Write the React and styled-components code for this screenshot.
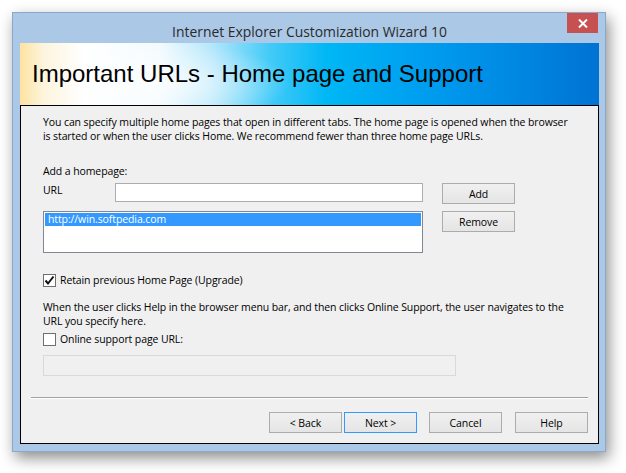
import React from "react";
import styled, { createGlobalStyle } from "styled-components";

const GlobalStyle = createGlobalStyle`
  html, body {
    margin: 0;
    padding: 0;
    background: #ffffff;
  }
  body {
    font-family: "Open Sans", "Noto Sans", sans-serif;
    font-size: 10.5px;
    letter-spacing: -0.1px;
    color: #000;
  }
`;

const Page = styled.div`
  width: 626px;
  height: 473px;
  padding: 12px 0 0 12px;
  box-sizing: border-box;
`;

const Window = styled.div`
  width: 594px;
  height: 440px;
  box-sizing: border-box;
  display: flex;
  flex-direction: column;
  padding: 0 6px 7px 7px;
  background: #abc8e6;
  border: 1px solid #89a8cb;
  box-shadow: 3px 6px 14px rgba(0, 0, 0, 0.45);
`;

const TitleBar = styled.div`
  height: 30px;
  display: grid;
  grid-template-columns: 1fr auto 1fr;
  align-items: start;
`;

const Title = styled.div`
  grid-column: 2;
  padding-top: 9px;
  font-size: 13.9px;
  letter-spacing: 0;
  color: #2a2a2a;
  white-space: nowrap;
`;

const CloseButton = styled.div`
  grid-column: 3;
  justify-self: end;
  margin-right: 1px;
  width: 31px;
  height: 20px;
  background: #c75050;
  display: flex;
  align-items: center;
  justify-content: center;
`;

const Banner = styled.div`
  height: 62px;
  display: flex;
  align-items: center;
  padding-left: 12px;
  background:
    radial-gradient(ellipse 120px 40px at 150px 40px, rgba(255, 255, 255, 0.7), rgba(255, 255, 255, 0)),
    linear-gradient(90deg, #fde3a0 0%, #fdf4dc 4%, #ffffff 11%, #f3fbfe 24%, #b5e7fb 33%, #44cbf8 43%, #00b7f5 53%, #009def 70%, #0086e2 87%, #0072d2 100%);
`;

const BannerTitle = styled.h1`
  margin: 0;
  font-family: "Liberation Sans", Arial, sans-serif;
  font-weight: normal;
  font-size: 24px;
  letter-spacing: 0;
  color: #000;
`;

const Content = styled.div`
  flex: 1;
  display: flex;
  flex-direction: column;
  background: #f0f0f0;
  border: 1px solid #000;
`;

const Body = styled.div`
  display: flex;
  flex-direction: column;
  padding: 9px 0 0 22px;
`;

const Text = styled.p`
  margin: ${(p) => p.$top || 0}px 0 0 0;
  line-height: 14px;
  white-space: nowrap;
`;

const UrlGrid = styled.div`
  margin-top: 5px;
  display: grid;
  grid-template-columns: 72px 308px 19px 73px;
  grid-template-rows: 21px 42px;
  row-gap: 7px;
`;

const Label = styled.span`
  line-height: 14px;
`;

const TextBox = styled.div`
  height: 19px;
  box-sizing: border-box;
  background: #fff;
  border: 1px solid #abadb3;
`;

const ListBox = styled.div`
  grid-column: 1 / span 2;
  width: 380px;
  box-sizing: border-box;
  padding: 1px;
  background: #fff;
  border: 1px solid #828790;
`;

const ListItem = styled.div`
  height: 13px;
  line-height: 13px;
  padding-left: 3px;
  background: ${(p) => (p.$selected ? "#3399ff" : "transparent")};
  color: ${(p) => (p.$selected ? "#fff" : "#000")};
`;

const Button = styled.button`
  grid-column: ${(p) => p.$col || "auto"};
  width: 73px;
  height: 21px;
  margin: 0 0 0 ${(p) => p.$space || 0}px;
  padding: 0;
  box-sizing: border-box;
  font-family: "Open Sans", "Noto Sans", sans-serif;
  font-size: 10.5px;
  letter-spacing: -0.1px;
  color: #000;
  background: linear-gradient(#f0f0f0, #e5e5e5);
  border: 1px solid ${(p) => (p.$default ? "#3399ff" : "#acacac")};
`;

const CheckRow = styled.label`
  margin-top: ${(p) => p.$top}px;
  display: flex;
  align-items: center;
  gap: 4px;
  height: 13px;
  line-height: 13px;
`;

const Box = styled.span`
  width: 13px;
  height: 13px;
  box-sizing: border-box;
  background: #fff;
  border: 1px solid #707070;
  display: flex;
  align-items: center;
  justify-content: center;
`;

const DisabledBox = styled.div`
  margin-top: 9px;
  width: 413px;
  height: 21px;
  box-sizing: border-box;
  background: #f0f0f0;
  border: 1px solid #d9d9d9;
`;

const Footer = styled.div`
  margin-top: auto;
  padding: 0 10px 10px 10px;
`;

const Separator = styled.div`
  border-top: 1px solid #a0a0a0;
  border-bottom: 1px solid #ffffff;
`;

const ButtonRow = styled.div`
  margin-top: 13px;
  display: flex;
  justify-content: flex-end;
`;

const Checkbox = ({ checked }) => (
  <Box>
    {checked && (
      <svg width="11" height="11" viewBox="0 0 11 11">
        <path d="M1.5 5.5 L4 8.5 L9.5 1.5" fill="none" stroke="#111" strokeWidth="2" />
      </svg>
    )}
  </Box>
);

export default function App() {
  return (
    <Page>
      <GlobalStyle />
      <Window>
        <TitleBar>
          <Title>Internet Explorer Customization Wizard 10</Title>
          <CloseButton>
            <svg width="10" height="9" viewBox="0 0 10 9">
              <path d="M1 0.5 L9 8.5 M9 0.5 L1 8.5" stroke="#fff" strokeWidth="2" />
            </svg>
          </CloseButton>
        </TitleBar>
        <Banner>
          <BannerTitle>Important URLs - Home page and Support</BannerTitle>
        </Banner>
        <Content>
          <Body>
            <Text>
              You can specify multiple home pages that open in different tabs. The home page is opened when the browser
              <br />
              is started or when the user clicks Home. We recommend fewer than three home page URLs.
            </Text>
            <Text $top={21}>Add a homepage:</Text>
            <UrlGrid>
              <Label>URL</Label>
              <TextBox />
              <Button $col={4}>Add</Button>
              <ListBox>
                <ListItem $selected>http://win.softpedia.com</ListItem>
              </ListBox>
              <Button $col={4}>Remove</Button>
            </UrlGrid>
            <CheckRow $top={21}>
              <Checkbox checked />
              Retain previous Home Page (Upgrade)
            </CheckRow>
            <Text $top={13}>
              When the user clicks Help in the browser menu bar, and then clicks Online Support, the user navigates to the
              <br />
              URL you specify here.
            </Text>
            <CheckRow $top={5}>
              <Checkbox />
              Online support page URL:
            </CheckRow>
            <DisabledBox />
          </Body>
          <Footer>
            <Separator />
            <ButtonRow>
              <Button>&lt; Back</Button>
              <Button $space={2} $default>Next &gt;</Button>
              <Button $space={12}>Cancel</Button>
              <Button $space={13}>Help</Button>
            </ButtonRow>
          </Footer>
        </Content>
      </Window>
    </Page>
  );
}
